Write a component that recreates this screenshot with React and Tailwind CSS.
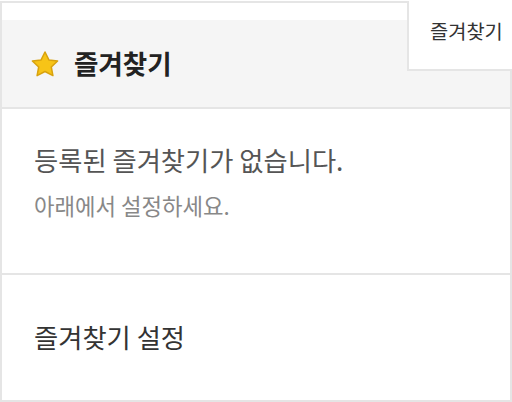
import React from 'react';

const Star = () => (
  <svg width="28" height="26" viewBox="0 0 28 26" aria-hidden="true">
    <polygon
      points="14,1 17.9,8.9 26.6,10 20.3,16 21.9,24.6 14,20.5 6.1,24.6 7.7,16 1.4,10 10.1,8.9"
      fill="#f7c417"
      stroke="#d8a20e"
      strokeWidth="1.5"
      strokeLinejoin="round"
    />
  </svg>
);

const App = () => {
  return (
    <div className="relative w-[512px] h-[402px] bg-white font-['Noto_Sans_CJK_KR',sans-serif]">
      <div className="mt-px h-[401px] border-2 border-[#e5e5e5] flex flex-col">
        <div className="h-[17px] shrink-0" />

        <div className="h-[89px] shrink-0 bg-[#f5f5f5] border-b-2 border-[#e5e5e5] flex items-center pl-[29px]">
          <Star />
          <h2 className="ml-[15px] text-[26.5px] font-bold text-[#222] leading-none">즐겨찾기</h2>
        </div>

        <div className="h-[166px] shrink-0 border-b-2 border-[#e5e5e5] pl-[32px] pt-[38px]">
          <p className="text-[26.3px] leading-none text-[#555]">등록된 즐겨찾기가 없습니다.</p>
          <p className="mt-[21px] text-[22.3px] leading-none text-[#888]">아래에서 설정하세요.</p>
        </div>

        <div className="flex-1 flex items-center pl-[32px]">
          <span className="text-[26.3px] leading-none text-[#333]">즐겨찾기 설정</span>
        </div>
      </div>

      <div className="absolute top-0 right-0 w-[105px] h-[70px] bg-white border-l-2 border-b-2 border-[#e5e5e5] pl-[21px] pt-[20px]">
        <span className="block text-[19.8px] leading-none text-[#333] whitespace-nowrap">즐겨찾기</span>
      </div>
    </div>
  );
};

export default App;
